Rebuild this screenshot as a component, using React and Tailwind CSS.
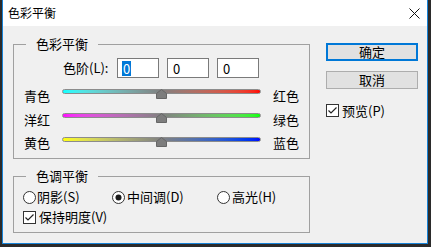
import React from "react";

const font = { fontFamily: '"Noto Sans CJK SC", "Noto Sans", sans-serif' };

const Thumb = () => (
  <svg className="absolute left-[94px] top-0" width="11" height="10" viewBox="0 0 11 10">
    <path d="M5.5 0.5 L10.5 4.5 L10.5 9.5 L0.5 9.5 L0.5 4.5 Z" fill="#7d7d7d" stroke="#666666" strokeWidth="1" />
  </svg>
);

const SliderRow = ({ left, right, gradient, height }) => (
  <div className={`flex items-center pl-[10px] ${height}`}>
    <span className="w-[26px] mt-[3px] text-[13px] leading-[18px] text-black">{left}</span>
    <div className="relative ml-[12px] w-[199px] h-[10px]">
      <div className={`h-[5px] rounded-full border border-[#8c8c8c] ${gradient}`} />
      <Thumb />
    </div>
    <span className="ml-[12px] mt-[3px] text-[13px] leading-[18px] text-black">{right}</span>
  </div>
);

const Radio = ({ checked }) => (
  <svg width="13" height="13" viewBox="0 0 13 13" className="shrink-0">
    <circle cx="6.5" cy="6.5" r="6" fill="#ffffff" stroke="#333333" strokeWidth="1" />
    {checked && <circle cx="6.5" cy="6.5" r="3" fill="#1a1a1a" />}
  </svg>
);

const Check = () => (
  <svg width="13" height="13" viewBox="0 0 13 13" className="shrink-0">
    <rect x="0.5" y="0.5" width="12" height="12" fill="#ffffff" stroke="#333333" strokeWidth="1" />
    <path d="M2.5 6.5 L5 9 L10.5 3.5" fill="none" stroke="#222222" strokeWidth="1.2" />
  </svg>
);

const Field = ({ selected }) => (
  <div className="w-[42px] h-[20px] border border-[#7a7a7a] bg-white flex items-center pl-[4px] text-[13px]">
    {selected ? (
      <span className="bg-[#0078d7] text-white px-[1px] leading-[15px]">0</span>
    ) : (
      <span className="px-[1px] leading-[15px]">0</span>
    )}
  </div>
);

export default function App() {
  return (
    <div className="w-[431px] h-[247px] bg-[#2b2b2b] pl-[2px]" style={font}>
      <div className="w-[426px] h-[244px] border-x border-b border-[#1883d7] bg-[#f0f0f0] flex flex-col text-black">
        <div className="h-[26px] bg-white flex items-center justify-between pl-[5px] pr-[7px]">
          <span className="text-[12px] leading-[16px]">色彩平衡</span>
          <svg width="11" height="11" viewBox="0 0 11 11">
            <path d="M0.5 0.5 L10.5 10.5 M10.5 0.5 L0.5 10.5" stroke="#111111" strokeWidth="1" />
          </svg>
        </div>

        <div className="flex">
          <div className="ml-[10px] w-[297px]">
            <div className="relative mt-[18px] h-[115px] border border-[#a0a0a0]">
              <span className="absolute left-[12px] -top-[10px] px-[10px] bg-[#f0f0f0] text-[13px] leading-[18px]">色彩平衡</span>
              <div className="flex items-center mt-[13px] ml-[49px]">
                <span className="w-[54px] text-[13px] leading-[18px]">色阶(L):</span>
                <div className="flex gap-[8px]">
                  <Field selected />
                  <Field />
                  <Field />
                </div>
              </div>
              <div className="mt-[4px]">
                <SliderRow left="青色" right="红色" height="h-[24px]" gradient="bg-gradient-to-r from-[#00ffff] via-[#808080] to-[#ff0000]" />
                <SliderRow left="洋红" right="绿色" height="h-[24px]" gradient="bg-gradient-to-r from-[#ff00ff] via-[#808080] to-[#00ff00]" />
                <SliderRow left="黄色" right="蓝色" height="h-[23px]" gradient="bg-gradient-to-r from-[#ffff00] via-[#808080] to-[#0000ff]" />
              </div>
            </div>

            <div className="relative mt-[17px] h-[57px] border border-[#a0a0a0] pt-[10px] pl-[9px]">
              <span className="absolute left-[12px] -top-[10px] px-[10px] bg-[#f0f0f0] text-[13px] leading-[18px]">色调平衡</span>
              <div className="flex items-center h-[20px] text-[13px] leading-[18px]">
                <div className="flex items-center w-[89px]">
                  <Radio />
                  <span className="ml-[1px]">阴影(S)</span>
                </div>
                <div className="flex items-center w-[105px]">
                  <Radio checked />
                  <span className="ml-[2px]">中间调(D)</span>
                </div>
                <div className="flex items-center">
                  <Radio />
                  <span className="ml-[2px]">高光(H)</span>
                </div>
              </div>
              <div className="flex items-center h-[20px] text-[13px] leading-[18px]">
                <Check />
                <span className="ml-[3px]">保持明度(V)</span>
              </div>
            </div>
          </div>

          <div className="ml-[16px] mt-[17px] flex flex-col">
            <button className="w-[92px] h-[18px] border-2 border-[#0078d7] bg-[#e1e1e1] text-[13px] leading-[14px] flex items-center justify-center">确定</button>
            <button className="mt-[10px] w-[92px] h-[18px] border border-[#adadad] bg-[#e1e1e1] text-[13px] leading-[14px] flex items-center justify-center">取消</button>
            <div className="mt-[15px] flex items-center h-[13px] text-[13px] leading-[18px]">
              <Check />
              <span className="ml-[3px]">预览(P)</span>
            </div>
          </div>
        </div>
      </div>
    </div>
  );
}
